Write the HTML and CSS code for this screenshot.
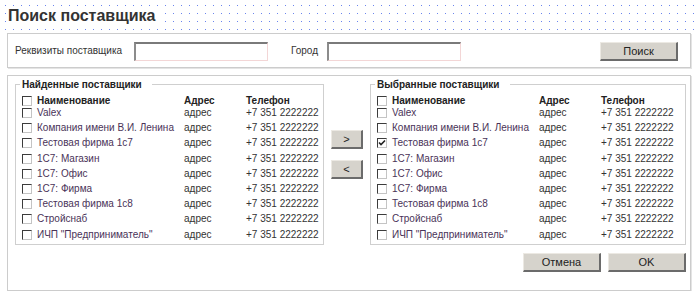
FILE: index.html
```html
<!DOCTYPE html>
<html lang="ru">
<head>
  <meta charset="UTF-8" />
  <title>Поиск поставщика</title>
  <link rel="stylesheet" href="styles.css">
</head>
<body>
  <div class="page-head">
    <h1><span>Поиск поставщика</span></h1>
  </div>

  <div class="panel search-bar">
    <label class="search-label req">Реквизиты поставщика</label>
    <input type="text" class="field">
    <label class="search-label city">Город</label>
    <input type="text" class="field">
    <button class="btn btn-search">Поиск</button>
  </div>

  <div class="panel picker">
    <fieldset class="group">
      <legend>Найденные поставщики</legend>
      <div class="grid">
        <div class="row head"><span class="cb"></span><span>Наименование</span><span>Адрес</span><span>Телефон</span></div>
        <div class="row"><span class="cb"></span><span class="name">Valex</span><span>адрес</span><span>+7 351 2222222</span></div>
        <div class="row"><span class="cb"></span><span class="name">Компания имени В.И. Ленина</span><span>адрес</span><span>+7 351 2222222</span></div>
        <div class="row"><span class="cb"></span><span class="name">Тестовая фирма 1с7</span><span>адрес</span><span>+7 351 2222222</span></div>
        <div class="row"><span class="cb"></span><span class="name">1С7: Магазин</span><span>адрес</span><span>+7 351 2222222</span></div>
        <div class="row"><span class="cb"></span><span class="name">1С7: Офис</span><span>адрес</span><span>+7 351 2222222</span></div>
        <div class="row"><span class="cb"></span><span class="name">1С7: Фирма</span><span>адрес</span><span>+7 351 2222222</span></div>
        <div class="row"><span class="cb"></span><span class="name">Тестовая фирма 1с8</span><span>адрес</span><span>+7 351 2222222</span></div>
        <div class="row"><span class="cb"></span><span class="name">Стройснаб</span><span>адрес</span><span>+7 351 2222222</span></div>
        <div class="row"><span class="cb"></span><span class="name">ИЧП "Предприниматель"</span><span>адрес</span><span>+7 351 2222222</span></div>
      </div>
    </fieldset>

    <div class="move">
      <button class="btn btn-move">&gt;</button>
      <button class="btn btn-move">&lt;</button>
    </div>

    <fieldset class="group">
      <legend>Выбранные поставщики</legend>
      <div class="grid">
        <div class="row head"><span class="cb"></span><span>Наименование</span><span>Адрес</span><span>Телефон</span></div>
        <div class="row"><span class="cb"></span><span class="name">Valex</span><span>адрес</span><span>+7 351 2222222</span></div>
        <div class="row"><span class="cb"></span><span class="name">Компания имени В.И. Ленина</span><span>адрес</span><span>+7 351 2222222</span></div>
        <div class="row"><span class="cb checked"><svg width="8" height="8" viewBox="0 0 8 8"><path d="M1 3.5 L3 5.5 L7 1.5" fill="none" stroke="#222" stroke-width="1.6"/></svg></span><span class="name">Тестовая фирма 1с7</span><span>адрес</span><span>+7 351 2222222</span></div>
        <div class="row"><span class="cb"></span><span class="name">1С7: Магазин</span><span>адрес</span><span>+7 351 2222222</span></div>
        <div class="row"><span class="cb"></span><span class="name">1С7: Офис</span><span>адрес</span><span>+7 351 2222222</span></div>
        <div class="row"><span class="cb"></span><span class="name">1С7: Фирма</span><span>адрес</span><span>+7 351 2222222</span></div>
        <div class="row"><span class="cb"></span><span class="name">Тестовая фирма 1с8</span><span>адрес</span><span>+7 351 2222222</span></div>
        <div class="row"><span class="cb"></span><span class="name">Стройснаб</span><span>адрес</span><span>+7 351 2222222</span></div>
        <div class="row"><span class="cb"></span><span class="name">ИЧП "Предприниматель"</span><span>адрес</span><span>+7 351 2222222</span></div>
      </div>
    </fieldset>

    <div class="actions">
      <button class="btn btn-action">Отмена</button>
      <button class="btn btn-action">OK</button>
    </div>
  </div>
</body>
</html>
```

FILE: styles.css
```css
body {
  margin: 0;
  width: 700px;
  font-family: 'Liberation Sans', Arial, sans-serif;
  font-size: 10px;
  color: #333;
  background: #fff;
}

.page-head {
  height: 33px;
  background-image: conic-gradient(from 270deg at 1px 1px, #6a84ee 25%, transparent 0);
  background-size: 8px 8px;
  background-position: 5px 5px;
}

.page-head h1 {
  margin: 0;
  padding: 7px 0 0 7px;
  font-size: 16px;
  line-height: 18px;
  color: #333;
}

.page-head h1 span {
  background: #fff;
  padding: 1px 5px 1px 1px;
}

.panel {
  box-sizing: border-box;
  margin-left: 7px;
  width: 684px;
  border: 1px solid #ccc;
  box-shadow: 1px 1px 0 #e4e4e4;
}

.search-bar {
  height: 35px;
  display: flex;
  align-items: center;
  padding-left: 7px;
}

.search-label {
  color: #333;
}

.req {
  width: 119px;
}

.city {
  margin-left: 23px;
  width: 36px;
}

.field {
  box-sizing: border-box;
  width: 134px;
  height: 19px;
  margin: 1px 0 0;
  padding: 0 3px;
  background: #fff;
  border-style: solid;
  border-width: 2px 1px 1px 2px;
  border-color: #7a7a7a #f3d6d6 #f3d6d6 #8c8c8c;
  outline: none;
}

.btn {
  box-sizing: border-box;
  font-family: 'Liberation Sans', Arial, sans-serif;
  font-size: 11px;
  color: #222;
  background: #d6d3cc;
  border-style: solid;
  border-width: 1px 2px 2px 1px;
  border-color: #ece9e3 #6b6b6b #6b6b6b #ece9e3;
  padding: 0;
  cursor: pointer;
}

.btn-search {
  margin-left: auto;
  margin-right: 12px;
  width: 78px;
  height: 19px;
  margin-top: 2px;
}

.picker {
  margin-top: 7px;
  height: 216px;
  padding: 2px 4px 0 7px;
  display: grid;
  grid-template-columns: 309px 46px 316px;
  grid-template-rows: auto auto;
  align-content: start;
}

.group {
  margin: 0;
  padding: 0 0 0 6px;
  border: 1px solid #cfcfcf;
  min-width: 0;
}

.group legend {
  padding: 0 10px 0 2px;
  margin-left: -2px;
  font-weight: bold;
  line-height: 13px;
  color: #222;
}

.grid {
  padding-top: 4px;
}

.row {
  display: grid;
  grid-template-columns: 15px 147px 62px 1fr;
  height: 15.2px;
  line-height: 12px;
  white-space: nowrap;
}

.row.head {
  height: 12px;
  font-weight: bold;
  color: #222;
}

.name {
  color: #4a3358;
}

.cb {
  box-sizing: border-box;
  width: 10px;
  height: 10px;
  margin-top: 1px;
  border-style: solid;
  border-width: 1px;
  border-color: #3c3c3c #c4c4c4 #c4c4c4 #3c3c3c;
  background: #fff;
  display: flex;
  align-items: center;
  justify-content: center;
}

.move {
  display: flex;
  flex-direction: column;
  align-items: center;
  gap: 11px;
  padding-top: 52px;
}

.btn-move {
  width: 32px;
  height: 19px;
}

.actions {
  grid-column: 1 / 4;
  display: flex;
  justify-content: flex-end;
  gap: 7px;
  padding-top: 8px;
}

.btn-action {
  width: 78px;
  height: 19px;
}
```
